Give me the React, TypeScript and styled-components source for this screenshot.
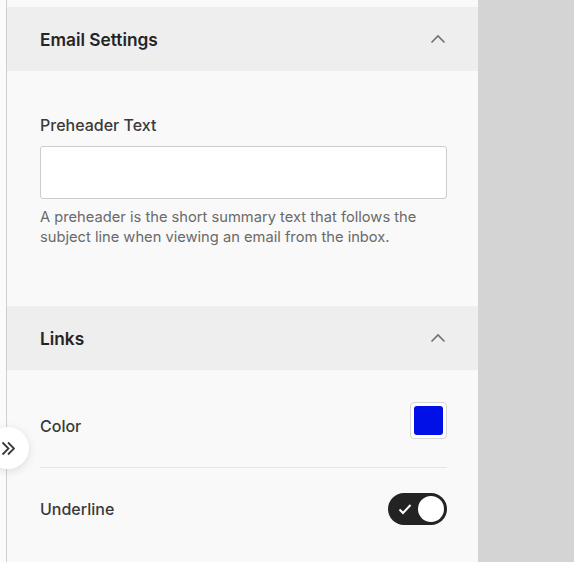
import React, { useState } from "react";
import styled, { createGlobalStyle } from "styled-components";

const GlobalStyle = createGlobalStyle`
  html, body {
    margin: 0;
    padding: 0;
    background: #ffffff;
  }
  body {
    font-family: Inter, "Noto Sans", "Liberation Sans", sans-serif;
    -webkit-font-smoothing: antialiased;
  }
`;

const Shell = styled.div`
  position: relative;
  display: flex;
  width: 574px;
  height: 562px;
  overflow: hidden;
`;

const Gutter = styled.div`
  width: 6px;
  flex-shrink: 0;
  background: #fbfbfb;
`;

const Panel = styled.aside`
  width: 471px;
  flex-shrink: 0;
  padding-top: 7px;
  border-left: 1px solid #cfcfcf;
  background: #f9f9f9;
  display: flex;
  flex-direction: column;
`;

const Backdrop = styled.div`
  flex: 1;
  background: #d4d4d4;
`;

const SectionHeader = styled.button`
  display: flex;
  align-items: center;
  justify-content: space-between;
  height: 64px;
  padding: 0 32px 0 33px;
  border: 0;
  background: #eeeeee;
  font-family: inherit;
  font-size: 17.3px;
  font-weight: 600;
  color: #242424;
  text-align: left;
  cursor: pointer;
`;

const Chevron = styled.svg`
  width: 16px;
  height: 10px;
  color: #707070;
`;

const SectionBody = styled.div<{ $pad: string }>`
  padding: ${({ $pad }) => $pad};
  display: flex;
  flex-direction: column;
`;

const FieldLabel = styled.label`
  font-size: 16px;
  line-height: 24px;
  font-weight: 500;
  color: #3a3a3a;
`;

const TextInput = styled.input`
  margin-top: 9px;
  height: 53px;
  box-sizing: border-box;
  width: 100%;
  border: 1px solid #cccccc;
  border-radius: 3px;
  background: #ffffff;
  padding: 0 12px;
  font-family: inherit;
  font-size: 15px;
  outline: none;
`;

const HelpText = styled.p`
  margin: 8px 0 0;
  font-size: 14.7px;
  line-height: 20px;
  color: #6a6a6a;
`;

const OptionRow = styled.div<{ $divider?: boolean }>`
  display: flex;
  align-items: center;
  justify-content: space-between;
  border-top: ${({ $divider }) => ($divider ? "1px solid #e6e6e6" : "none")};
`;

const ColorRow = styled(OptionRow)`
  padding: 32px 0 17px;
`;

const ToggleRow = styled(OptionRow)`
  padding: 25px 0;
`;

const OptionLabel = styled.span`
  font-size: 16px;
  line-height: 24px;
  font-weight: 500;
  color: #3a3a3a;
`;

const Swatch = styled.button<{ $color: string }>`
  width: 37px;
  height: 37px;
  margin-bottom: 11px;
  padding: 3px;
  box-sizing: border-box;
  border: 1px solid #d6d6d6;
  border-radius: 4px;
  background: #ffffff;
  cursor: pointer;

  &::after {
    content: "";
    display: block;
    width: 100%;
    height: 100%;
    border-radius: 3px;
    background: ${({ $color }) => $color};
  }
`;

const Toggle = styled.button<{ $on: boolean }>`
  position: relative;
  width: 59px;
  height: 32px;
  border: 0;
  border-radius: 16px;
  padding: 0;
  background: ${({ $on }) => ($on ? "#232323" : "#bdbdbd")};
  cursor: pointer;
`;

const ToggleCheck = styled.svg`
  position: absolute;
  left: 10px;
  top: 10px;
  width: 14px;
  height: 12px;
`;

const Knob = styled.span<{ $on: boolean }>`
  position: absolute;
  top: 3px;
  left: ${({ $on }) => ($on ? "30px" : "3px")};
  width: 26px;
  height: 26px;
  border-radius: 50%;
  background: #ffffff;
`;

const ExpandButton = styled.button`
  position: absolute;
  left: -13px;
  top: 427px;
  width: 42px;
  height: 42px;
  border: 0;
  border-radius: 50%;
  background: #ffffff;
  box-shadow: 0 2px 10px rgba(0, 0, 0, 0.12);
  display: flex;
  align-items: center;
  justify-content: center;
  padding: 0;
  cursor: pointer;
`;

const ExpandIcon = styled.svg`
  width: 14px;
  height: 15px;
  margin-left: -1px;
`;

function ChevronUp() {
  return (
    <Chevron viewBox="0 0 16 10" fill="none">
      <path d="M1.5 8.5L8 2l6.5 6.5" stroke="currentColor" strokeWidth="1.6" />
    </Chevron>
  );
}

export default function App() {
  const [underline, setUnderline] = useState(true);

  return (
    <>
      <GlobalStyle />
      <Shell>
        <Gutter />
        <Panel>
          <SectionHeader>
            Email Settings
            <ChevronUp />
          </SectionHeader>
          <SectionBody $pad="42px 31px 59px 33px">
            <FieldLabel htmlFor="preheader">Preheader Text</FieldLabel>
            <TextInput id="preheader" />
            <HelpText>
              A preheader is the short summary text that follows the subject line when
              viewing an email from the inbox.
            </HelpText>
          </SectionBody>

          <SectionHeader>
            Links
            <ChevronUp />
          </SectionHeader>
          <SectionBody $pad="0 31px 0 33px">
            <ColorRow>
              <OptionLabel>Color</OptionLabel>
              <Swatch $color="#0010e6" aria-label="Link color" />
            </ColorRow>
            <ToggleRow $divider>
              <OptionLabel>Underline</OptionLabel>
              <Toggle $on={underline} onClick={() => setUnderline(!underline)}>
                {underline && (
                  <ToggleCheck viewBox="0 0 14 12" fill="none">
                    <path d="M1.5 6.5l3.5 3.5L12.5 2" stroke="#ffffff" strokeWidth="2" />
                  </ToggleCheck>
                )}
                <Knob $on={underline} />
              </Toggle>
            </ToggleRow>
          </SectionBody>
        </Panel>
        <Backdrop />
        <ExpandButton aria-label="Expand">
          <ExpandIcon viewBox="0 0 14 15" fill="none">
            <path d="M1.5 1.5l6 6-6 6M7 1.5l6 6-6 6" stroke="#3a3a3a" strokeWidth="1.8" />
          </ExpandIcon>
        </ExpandButton>
      </Shell>
    </>
  );
}
